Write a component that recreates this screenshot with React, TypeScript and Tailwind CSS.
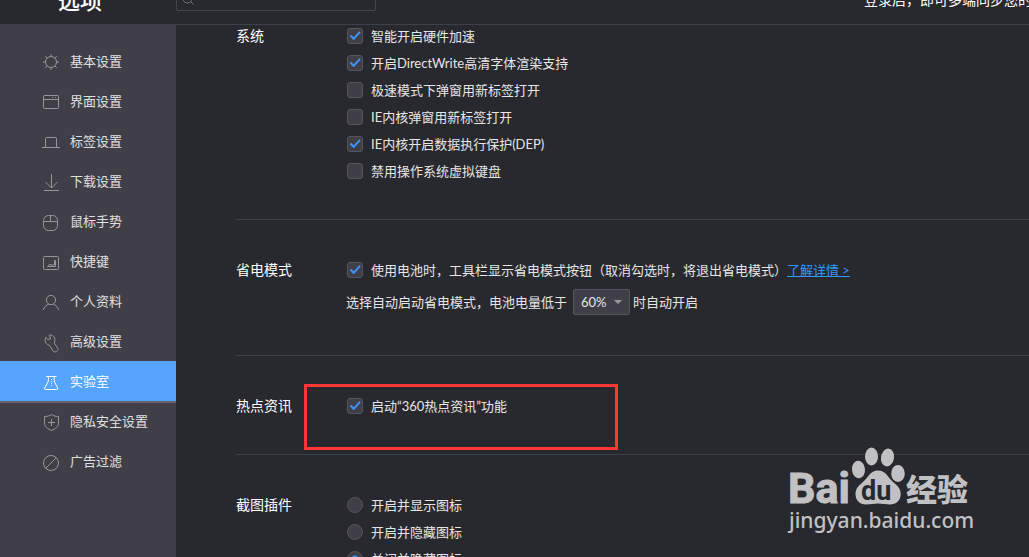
import type { ReactNode } from 'react'

const navItems: { label: string; active?: boolean; icon: ReactNode }[] = [
  {
    label: '基本设置',
    icon: (
      <>
        <circle cx="10" cy="11" r="5.5" />
        <path d="M10 3v2.5M10 16.5V19M2 11h2.5M15.5 11H18M4.3 5.3l1.8 1.8M13.9 14.9l1.8 1.8M4.3 16.7l1.8-1.8M13.9 7.1l1.8-1.8" />
      </>
    ),
  },
  {
    label: '界面设置',
    icon: (
      <>
        <rect x="2.5" y="4.5" width="15" height="13" rx="1" />
        <path d="M2.5 8.5h15M11 6.5h1M14 6.5h1" />
      </>
    ),
  },
  {
    label: '标签设置',
    icon: <path d="M1 16.5h18M4.5 16.5v-9q0-1 1-1h9q1 0 1 1v9" />,
  },
  {
    label: '下载设置',
    icon: <path d="M10.5 3v14M4.5 11l6 6 6-6M3 19.5h15" />,
  },
  {
    label: '鼠标手势',
    icon: (
      <>
        <rect x="2.5" y="4.5" width="14" height="15" rx="5" />
        <path d="M2.5 10.5h14M9.5 4.5v6" />
      </>
    ),
  },
  {
    label: '快捷键',
    icon: (
      <>
        <rect x="2.5" y="5.5" width="15" height="13" rx="1" />
        <path d="M13.5 9.500h1v6H6.500l2.500-2.500v1h4.500z" />
      </>
    ),
  },
  {
    label: '个人资料',
    icon: (
      <>
        <circle cx="10" cy="9" r="4.6" />
        <path d="M2.3 19c1-3.4 3.2-5 5.4-5.8M17.7 19c-1-3.4-3.2-5-5.4-5.8" />
      </>
    ),
  },
  {
    label: '高级设置',
    icon: (
      <path d="M8.3 4.200c2.200-.8 4.500.6 5.300 2.800.6 1.800.4 3.500-.4 5.300l3.800 5.200c.8 2.400-2.800 4.600-4.700 2.800L9 15.200c-.3-.9-.8-1.400-1.700-1.400C4.500 13 3.200 9.500 4.700 6.300l2 2.300 3-.8z" />
    ),
  },
  {
    label: '实验室',
    active: true,
    icon: (
      <>
        <path d="M5 5.5h10.500M7 5.500q1 3 0 5.500l-3.300 6q-.5 1.500 1 1.500h11q1.500 0 1-1.500l-3.200-6q-1-2.500 0-5.500" />
        <path d="M10.5 8v8" strokeDasharray="1 1" />
      </>
    ),
  },
  {
    label: '隐私安全设置',
    icon: <path d="M10.500 3.500c-2 1.500-4.500 2-7 2v6.500c0 4 3 5.500 7 7.500 4-2 7-3.500 7-7.500V5.500c-2.500 0-5-.5-7-2zM7 11.500h7M10.500 8v7" />,
  },
  {
    label: '广告过滤',
    icon: (
      <>
        <circle cx="10" cy="12" r="7.5" />
        <path d="M4.700 17.300L15.300 6.700" />
      </>
    ),
  },
]

const systemOptions = [
  { label: '智能开启硬件加速', checked: true },
  { label: '开启DirectWrite高清字体渲染支持', checked: true },
  { label: '极速模式下弹窗用新标签打开', checked: false },
  { label: 'IE内核弹窗用新标签打开', checked: false },
  { label: 'IE内核开启数据执行保护(DEP)', checked: true },
  { label: '禁用操作系统虚拟键盘', checked: false },
]

const screenshotOptions = ['开启并显示图标', '开启并隐藏图标', '关闭并隐藏图标']

function Check({ label, checked }: { label: string; checked: boolean }) {
  return (
    <label className="flex items-center gap-2 pl-px">
      <span className="relative size-4 shrink-0">
        <input
          type="checkbox"
          defaultChecked={checked}
          className="peer block size-4 appearance-none rounded-[3px] border border-[#55555c] bg-[#403f47]"
        />
        <svg
          viewBox="0 0 16 16"
          className="pointer-events-none absolute inset-0 hidden size-4 fill-none stroke-[#3c96ff] stroke-2 peer-checked:block"
        >
          <path d="M3.5 7.500l3.200 3.300L13 3.800" />
        </svg>
      </span>
      {label}
    </label>
  )
}

function Section({ title, first, children }: { title: string; first?: boolean; children: ReactNode }) {
  return (
    <section
      className={`relative flex border-b border-[#3f3f47] pb-10 ${first ? 'pt-[3px]' : 'pt-[42px]'}`}
    >
      <h2 className="w-[110px] shrink-0 text-sm leading-4 text-white">{title}</h2>
      <div className="flex flex-col gap-[11px] whitespace-nowrap">{children}</div>
    </section>
  )
}

function Watermark() {
  return (
    <svg
      viewBox="0 0 190 90"
      className="pointer-events-none absolute right-[54px] bottom-[22px] h-[90px] w-[190px] fill-[#d2d2d4] opacity-90"
      role="img"
      aria-label="Baidu 经验"
    >
      <text x="3" y="58" fontSize="43" fontWeight="700" fontFamily="Roboto, sans-serif" stroke="#d2d2d4" strokeWidth="1">Bai</text>
      <ellipse cx="73.5" cy="24.500" rx="6.500" ry="8.800" transform="rotate(-6 73.5 24.5)" />
      <ellipse cx="86.5" cy="11.500" rx="6.500" ry="9" />
      <ellipse cx="102.5" cy="12.500" rx="6.500" ry="9" transform="rotate(10 102.5 12.5)" />
      <ellipse cx="113" cy="28.500" rx="6.800" ry="8.500" />
      <path d="M93 25.500c-8 0-10 7-14 10.500-4.500 4-8.500 7-8.500 13 0 6.500 4.500 10.500 10.500 10.500 4 0 8-1 12-1s8 1 12 1c6 0 10.700-4 10.700-10.500 0-6-4-9-8.700-13-4-3.500-6-10.500-14-10.500z" />
      <text x="76" y="55" fontSize="27" fontWeight="700" fontFamily="Roboto, sans-serif" fill="#28282f">du</text>
      <text x="121" y="56" fontSize="31" fontWeight="900" fontFamily="'Noto Sans CJK SC', sans-serif">经验</text>
      <text x="4" y="83" fontSize="21" fontWeight="500" fontFamily="'Noto Sans', sans-serif">jingyan.baidu.com</text>
    </svg>
  )
}

export default function App() {
  return (
    <div className="relative flex h-screen flex-col overflow-hidden bg-[#28282f] font-[Lato,'Noto_Sans_CJK_SC',sans-serif] text-[13px] leading-4 text-[#e6e6e6]">
      {/* Header, scrolled partly out of view */}
      <header className="flex h-[25px] shrink-0 items-end overflow-hidden border-b border-[#3f3f47] whitespace-nowrap">
        <div className="flex flex-1 items-end pb-[13px]">
          <h1 className="w-44 shrink-0 pl-[58px] text-[22px] leading-5 font-medium text-white">选项</h1>
          <div className="relative w-[200px] shrink-0">
            <input
              type="search"
              aria-label="搜索设置"
              className="block h-7 w-full rounded-xs border border-[#44444b] bg-transparent pl-6 outline-none"
            />
            <svg viewBox="0 0 12 12" className="absolute bottom-[6px] left-[6px] size-3 fill-none stroke-[#77777c]">
              <circle cx="5.5" cy="5.500" r="4.500" />
              <path d="M9 9l2.500 2.500" />
            </svg>
          </div>
          <p className="ml-auto w-[165px] shrink-0 pb-[3px] text-sm leading-4 text-white">登录后，即可多端同步您的数据</p>
        </div>
      </header>

      <div className="flex min-h-0 flex-1">
        <nav className="w-44 shrink-0 bg-[#403f47] pt-4">
          {navItems.map(({ label, active, icon }) => (
            <a
              key={label}
              href="#"
              className={`flex h-10 items-center gap-[9px] pl-[41px] ${
                active ? 'bg-[#55a5ff] text-white shadow-[0_2px_0_#63636d]' : 'text-[#e0e0e0]'
              }`}
            >
              <svg
                viewBox="0 0 20 20"
                className={`size-5 shrink-0 overflow-visible fill-none ${active ? 'stroke-white' : 'stroke-[#97979b]'}`}
              >
                {icon}
              </svg>
              {label}
            </a>
          ))}
        </nav>

        <main className="min-w-0 flex-1 overflow-hidden pl-[60px]">
          <Section title="系统" first>
            {systemOptions.map((option) => (
              <Check key={option.label} {...option} />
            ))}
          </Section>

          <Section title="省电模式">
            <div className="flex">
              <Check label="使用电池时，工具栏显示省电模式按钮（取消勾选时，将退出省电模式）" checked />
              <a href="#" className="text-[#3296ff] underline">了解详情 &gt;</a>
            </div>
            <div className="flex items-center">
              <label htmlFor="battery">选择自动启动省电模式，电池电量低于</label>
              <span className="relative mr-[3px] ml-[6px]">
                <select
                  id="battery"
                  defaultValue="60%"
                  className="block h-[26px] w-[57px] appearance-none rounded-xs border border-[#55555c] bg-[#403f47] pl-[7px]"
                >
                  <option>20%</option>
                  <option>40%</option>
                  <option>60%</option>
                </select>
                <svg viewBox="0 0 8 4" className="pointer-events-none absolute top-[11px] right-2 h-1 w-2 fill-[#9a9a9e]">
                  <path d="M0 0h8L4 4z" />
                </svg>
              </span>
              时自动开启
            </div>
          </Section>

          <Section title="热点资讯">
            <Check label="启动“360热点资讯”功能" checked />
            <div className="pointer-events-none absolute top-7 left-[68px] h-[66px] w-[314px] border-3 border-[#ff3835]" />
          </Section>

          <Section title="截图插件">
            {screenshotOptions.map((label, i) => (
              <label key={label} className="flex items-center gap-2 pl-px">
                <input
                  type="radio"
                  name="screenshot"
                  defaultChecked={i === 2}
                  className="size-4 shrink-0 appearance-none rounded-full border border-[#55555c] bg-[#403f47] checked:bg-[radial-gradient(#3c96ff_3px,#403f47_4px)]"
                />
                {label}
              </label>
            ))}
          </Section>
        </main>
      </div>

      <Watermark />
    </div>
  )
}
